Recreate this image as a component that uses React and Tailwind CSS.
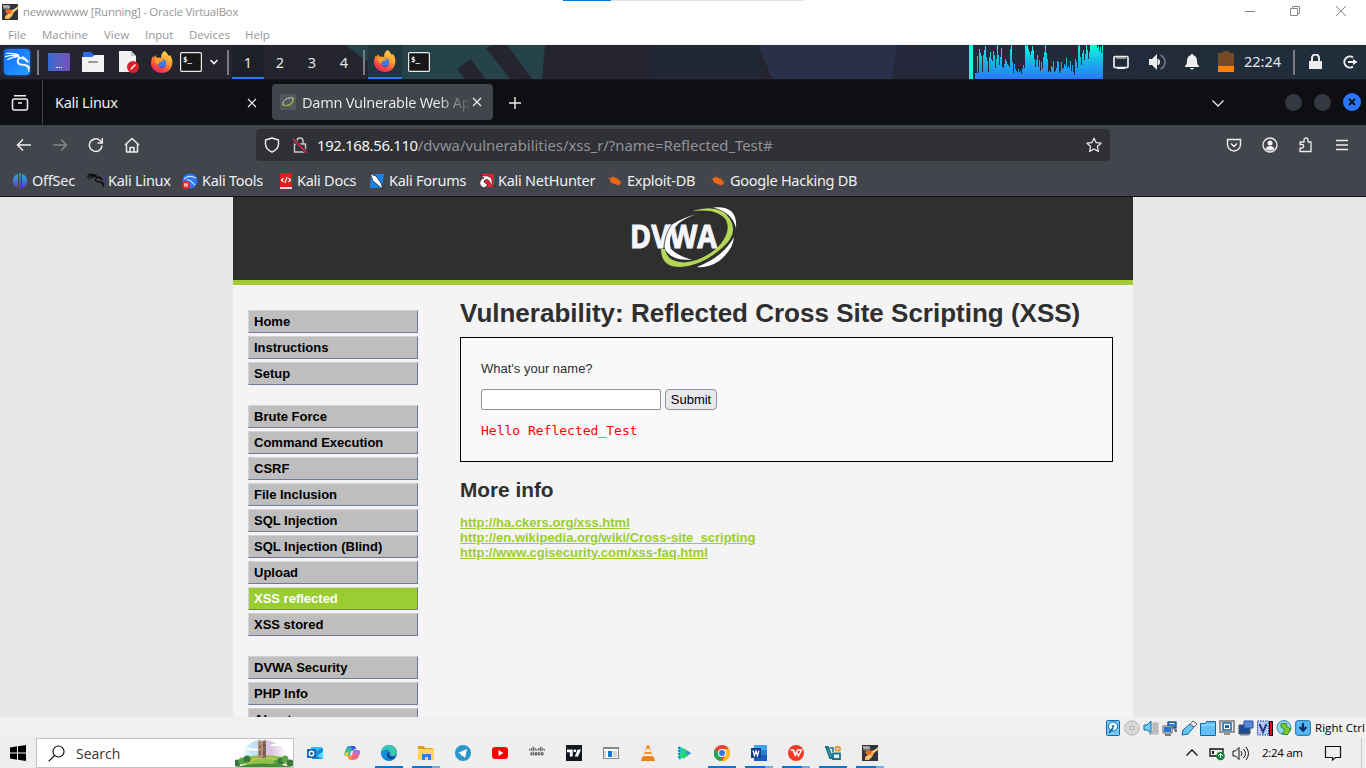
import React from "react";
import { SiKalilinux, SiCisco, SiTradingview } from "react-icons/si";

const WIN = "font-['Open_Sans','Noto_Sans',sans-serif]";

function Svg({ s = 16, vb = 16, className = "", children, ...rest }) {
  return (
    <svg width={s} height={s} viewBox={`0 0 ${vb} ${vb}`} className={`shrink-0 ${className}`} fill="none" {...rest}>
      {children}
    </svg>
  );
}

const VBoxIcon = () => (
  <Svg>
    <rect width="16" height="16" fill="#30343d" />
    <path d="M1 1h7v4l-3 1-4-1z" fill="#777" />
    <path d="M1 2h2v2M5 1v3M7 2v2" stroke="#ddd" />
    <path d="M9 6l4-1 3-3v3l-4 3-2 4-3 3H3v-3l3-2 2-3z" fill="#f9b352" />
    <path d="M3 7l3-2 4 1-1 3-4 1z" fill="#ee6820" />
    <path d="M11 7l4-3M5 13l3-2" stroke="#ffe1a0" strokeWidth="1.500" />
  </Svg>
);

const Firefox = () => (
  <Svg s={22} vb={22}>
    <defs>
      <linearGradient id="ff" x1="0.8" y1="0" x2="0.3" y2="1">
        <stop offset="0" stopColor="#ffde45" />
        <stop offset=".45" stopColor="#ff9a2b" />
        <stop offset=".75" stopColor="#ff4a42" />
        <stop offset="1" stopColor="#e4206c" />
      </linearGradient>
    </defs>
    <path d="M14 0c2 2 3 4 4 5l1-1c2 3 3 6 2 10-1 5-5 8-10 8C5 22 0 18 0 12c0-3 1-5 2-7l1 2 1-3 2 3c2-1 3 0 4 0 0-3 1-6 4-7z" fill="url(#ff)" />
    <circle cx="11" cy="12" r="4.2" fill="#3d7bea" />
    <path d="M4 8c2-1 4-1 6 0l3 1c-1 2-3 1-4 2-2 1-1 3-3 2-2 0-2-3-2-5z" fill="#ff9d28" />
    <path d="M7 14c3 3 7 2 8-1 0 4-5 7-8 1z" fill="#5946bd" />
  </Svg>
);

const TerminalIcon = () => (
  <svg width="22" height="20" viewBox="0 0 22 20" className="shrink-0">
    <rect x=".6" y=".6" width="20.8" height="18.8" rx="1" fill="#171717" stroke="#e8e8e8" strokeWidth="1.2" />
    <text x="3" y="9.5" fontSize="7.5" fontWeight="700" fill="#fff" fontFamily="DejaVu Sans Mono">$_</text>
  </svg>
);

const Dragon = ({ c = "#fff", s = 24 }) => <SiKalilinux size={s} color={c} stroke={c} strokeWidth="1" className="shrink-0" />;

/* ---------- VirtualBox window frame ---------- */

function VmTitle() {
  return (
    <header className={`h-[45px] bg-white ${WIN} text-[11.5px] text-[#979797] border-b border-[#f0f0f0] relative`}>
      <div className="absolute left-[563px] top-0 h-px w-[241px] bg-[#e3e3e3]">
        <div className="h-px w-12 bg-[#0078d7]" />
      </div>
      <div className="flex h-[23px] items-center pl-0.5">
        <VBoxIcon />
        <span className="ml-[5px] whitespace-nowrap tracking-[-0.25px]">newwwwww [Running] - Oracle VirtualBox</span>
        <div className="ml-auto flex items-center pr-[19px] -mt-0.5">
          <Svg s={12} vb={12} className="mr-[33px]"><path d="M1 6.500h10" stroke="#888" /></Svg>
          <Svg s={12} vb={12} className="mr-[34px]"><path d="M1.500 3.500h7v7h-7zM3.500 3V1.500h7v7H9" stroke="#888" /></Svg>
          <Svg s={12} vb={12}><path d="M1 1l10 10M11 1L1 11" stroke="#888" /></Svg>
        </div>
      </div>
      <nav className="flex h-[22px] items-center pt-px">
        <span className="w-[34px] ml-2">File</span>
        <span className="w-[62px]">Machine</span>
        <span className="w-[41px]">View</span>
        <span className="w-[44px]">Input</span>
        <span className="w-[56px]">Devices</span>
        <span>Help</span>
      </nav>
    </header>
  );
}

/* ---------- Kali panel ---------- */

const LOAD = [
  6, 6, 23, 6, 30, 26, 23, 7, 24, 29, 33, 22, 18, 7, 22, 27, 20, 18, 28, 24,
  11, 20, 34, 24, 14, 22, 31, 12, 11, 15, 20, 18, 15, 14, 12, 30, 34, 17, 6, 15,
  10, 8, 7, 10, 7, 8, 5, 10, 14, 11, 34, 33, 34, 30, 27, 24, 28, 33, 29, 20,
  12, 19, 24, 12, 19, 8, 17, 10, 22, 27, 34, 26, 20, 7, 8, 7, 13, 12, 18, 7,
  8, 11, 18, 17, 6, 8, 17, 10, 11, 15, 13, 21, 11, 13, 11, 18, 8, 14, 7, 4,
  20, 17, 11, 33, 34, 22, 14, 26, 29, 19, 25, 34, 29, 20, 27, 34, 34, 34, 34, 34,
  34, 34, 31, 33, 28, 32, 26, 34,
];

function Divider() {
  return <div className="h-[25px] w-0.5 bg-[#7b7d83] shrink-0" />;
}

function KaliPanel() {
  return (
    <div className="relative h-[35px] bg-[#24252e] font-['Noto_Sans',sans-serif] text-[14.500px] text-[#e6e6e6]">
      <svg className="absolute inset-0" width="1366" height="35" viewBox="0 45 1366 35">
        <defs>
          <linearGradient id="wall"><stop offset="0" stopColor="#24283a" /><stop offset="1" stopColor="#202e3b" /></linearGradient>
          <linearGradient id="load" x1="0" y1="45" x2="0" y2="79" gradientUnits="userSpaceOnUse"><stop offset="0" stopColor="#08ffe0" /><stop offset=".5" stopColor="#17b3e8" /><stop offset="1" stopColor="#2979ff" /></linearGradient>
        </defs>
        <path d="M345 45h200l-3 35H393z" fill="#26424b" />
        <path d="M457 69l14-10 15 21h-20zM486 48l7-3h14l26 35h-22z" fill="#25252f" />
        <rect x="650" y="45" width="110" height="35" fill="#222737" />
        <path d="M758 45h140l-7 35H773z" fill="#283149" />
        <path d="M898 45h468v35H891z" fill="url(#wall)" />
        <path d="M0 79.500h1366" stroke="#15171d" />
        <rect x="969" y="45" width="4" height="34" fill="#08ffe0" />
        {LOAD.map((h, i) => <rect key={i} x={975 + i} y={79 - h} width="1" height={h} fill="url(#load)" />)}
      </svg>
      <div className="relative flex h-[34px] items-center">
        <div className="ml-[4px] flex h-[26px] w-[26px] items-center justify-center rounded-sm bg-gradient-to-br from-[#176cff] to-[#279cff] shadow-[0_0_3px_#1767ff]"><Dragon s={25} /></div>
        <div className="ml-[7px]"><Divider /></div>
        <div className="ml-[9px] flex h-[18px] w-[22px] items-end justify-center rounded-[1px] bg-gradient-to-r from-[#346bd1] to-[#7252b8] pb-0.5"><Svg s={6} vb={6}><path d="M0 4.500h1.500M2.500 4.500H4M5 4.500h1" stroke="#fff" /></Svg></div>
        <svg className="ml-3" width="22" height="20" viewBox="0 0 22 20"><path d="M1 0h8l3 3h8v6H1z" fill="#2a6ce4" /><path d="M0 5h10l3-2h9v17H0z" fill="#f2f2f2" /><rect x="6" y="9" width="10" height="2" rx="1" fill="#999" /></svg>
        <svg className="ml-3.5" width="22" height="22" viewBox="0 0 22 22"><path d="M1 0h12l5 5v16H1z" fill="#f1f1f1" /><path d="M13 0v5h5z" fill="#c9c9c9" /><circle cx="15" cy="16" r="6" fill="#d8202a" /><path d="M12 19l1-2 4-4 1 1-4 4z" fill="#fff" /></svg>
        <div className="ml-[11px]"><Firefox /></div>
        <div className="ml-[7px]"><TerminalIcon /></div>
        <Svg s={12} vb={12} className="ml-1.5"><path d="M2.500 4l3.500 3.500L9.500 4" stroke="#eee" strokeWidth="1.700" /></Svg>
        <div className="ml-[7px]"><Divider /></div>
        <div className="ml-[3px] flex text-center leading-[34px]">
          <span className="h-[34px] w-8 border-b-2 border-[#2777ff] bg-[#1c2027]">1</span>
          <span className="w-8">2</span><span className="w-8">3</span><span className="w-8">4</span>
        </div>
        <div className="ml-[3px]"><Divider /></div>
        <div className="ml-[3px] flex h-[34px] w-[34px] items-center justify-center border-b-2 border-[#2777ff] bg-[#22363e]"><Firefox /></div>
        <div className="ml-1.5"><TerminalIcon /></div>
        <div className="ml-auto flex items-center">
          <Svg className="mr-[19px]"><rect x="1" y="2.500" width="14" height="11" rx="1" stroke="#eee" strokeWidth="1.700" /><path d="M4 2v3M6 2v3M8 2v3M10 2v3M12 2v3M4 13v1.500h8V13" stroke="#eee" /></Svg>
          <Svg s={18} vb={18} className="mr-[18px]"><path d="M1 6h3l5-5v16l-5-5H1z" fill="#eee" /><path d="M10 6c2 1 2 5 0 6z" stroke="#eee" fill="#eee" /><path d="M12.500 2c6 3 6 11 0 14" stroke="#798087" strokeWidth="1.500" /></Svg>
          <Svg className="mr-[18px]"><path d="M7 0h2v1c3 1 4 3 4 6 0 3 1 4 2 5v1H1v-1c1-1 2-2 2-5 0-3 1-5 4-6zM6 14h4c-1 2-3 2-4 0z" fill="#eee" /></Svg>
          <svg width="16" height="22" viewBox="0 0 16 22" className="mr-[10px]"><path d="M0 2h5V0h6v2h5v19H0z" fill="#754a25" /><path d="M0 15h16v6H0z" fill="#ff8109" /></svg>
          <span className="w-[49px]">22:24</span>
          <Divider />
          <Svg className="ml-[13px]"><path d="M1 7h13v8H1z" fill="#eee" /><path d="M4 8V4a3.500 3.500 0 017 0v4" stroke="#eee" strokeWidth="2" /></Svg>
          <Svg className="mr-[8px] ml-[18px]"><path d="M11 3.500A5.500 5.500 0 1011 12.500" stroke="#eee" strokeWidth="2" /><path d="M6 8h6" stroke="#eee" strokeWidth="2" /><path d="M11 5l4.500 3-4.500 3z" fill="#eee" /></Svg>
        </div>
      </div>
    </div>
  );
}

/* ---------- Browser chrome ---------- */

const Cross = () => <Svg s={10} vb={10}><path d="M1 1l8 8M9 1L1 9" stroke="#eee" strokeWidth="1.200" /></Svg>;

function TabBar() {
  return (
    <div className="flex h-[45px] items-center bg-[#0e0f13] text-[#f0f0f0]">
      <Svg s={18} vb={18} className="ml-[11px]"><rect x="1.500" y="5" width="15" height="11" rx="2" stroke="#eee" strokeWidth="1.500" /><path d="M3 1.800h12M7 9h4" stroke="#eee" strokeWidth="1.500" /></Svg>
      <div className="ml-[13px] h-11 w-px self-start bg-[#44454a]" />
      <span className="ml-3 w-[192px]">Kali Linux</span>
      <Cross />
      <div className="ml-[15px] mt-1 flex h-9 w-[221px] items-center self-start rounded bg-[#43454c] pl-2">
        <div className="flex h-4 w-4 items-center justify-center rounded-[1px] bg-[#54585b]"><Svg s={14} vb={14}><path d="M2 10C1 5 7 2 12 3c1 5-4 9-10 7z" stroke="#ccc" /><path d="M12 3c1 5-4 9-10 7" stroke="#8fae3b" strokeWidth="1.300" /></Svg></div>
        <span className="ml-1.5 mt-px w-[167px] overflow-hidden whitespace-nowrap bg-gradient-to-r from-[#f0f0f0] from-80% to-[#55575d] bg-clip-text text-transparent">Damn Vulnerable Web Ap</span>
        <span className="ml-[3px]"><Cross /></span>
      </div>
      <Svg s={12} vb={12} className="ml-4"><path d="M6 0v12M0 6h12" stroke="#eee" strokeWidth="1.400" /></Svg>
      <Svg s={14} vb={14} className="ml-auto"><path d="M1.500 4.500L7 10l5.500-5.500" stroke="#eee" strokeWidth="1.300" /></Svg>
      <div className="-mt-px ml-[60px] flex items-center gap-3 pr-[5px]">
        <i className="h-[17px] w-[17px] rounded-full bg-[#353842]" />
        <i className="h-[17px] w-[17px] rounded-full bg-[#353842]" />
        <Svg s={18} vb={18}><circle cx="9" cy="9" r="9" fill="#2777ff" /><path d="M6 6l6 6M12 6l-6 6" stroke="#111722" strokeWidth="2.200" /></Svg>
      </div>
    </div>
  );
}

function NavBar() {
  return (
    <div className="flex h-10 items-center text-[#eee]">
      <Svg className="ml-4" stroke="#eee" strokeWidth="1.500"><path d="M15 8H2M7 2.500L1.500 8 7 13.500" /></Svg>
      <Svg className="ml-5" stroke="#83858a" strokeWidth="1.500"><path d="M1 8h13M9 2.500L14.500 8 9 13.500" /></Svg>
      <Svg className="ml-5" stroke="#eee" strokeWidth="1.500"><path d="M14 8.500A6.300 6.300 0 1112 3.500l2 2M14.300 1v5H9.500" /></Svg>
      <Svg className="ml-5" stroke="#eee" strokeWidth="1.500"><path d="M1 8l7-6.500L15 8M2.500 7v8h11V7M6 15v-4.500h4V15" strokeLinejoin="round" /></Svg>
      <div className="ml-[116px] flex h-8 w-[854px] items-center rounded bg-[#303136]">
        <Svg className="ml-2"><path d="M8 1l6.500 2v4c0 4-3 6.500-6.500 8C4.500 13.500 1.500 11 1.500 7V3z" stroke="#eee" strokeWidth="1.400" strokeLinejoin="round" /></Svg>
        <Svg className="ml-3"><path d="M2.500 7h11v8h-11zM5 7V4a3 3 0 016 0v3" stroke="#ccc" strokeWidth="1.400" /><path d="M1 2l13.500 13.500" stroke="#303136" strokeWidth="3.500" /><path d="M1 2l13.500 13.500" stroke="#e22850" strokeWidth="1.600" /></Svg>
        <span className="ml-[9px] whitespace-nowrap text-[14.850px] tracking-[-0.33px] text-[#f4f4f4]">192.168.56.110<span className="tracking-normal text-[#919297]">/dvwa/vulnerabilities/xss_r/?name=Reflected_Test#</span></span>
        <Svg className="ml-auto mr-2"><path d="M8 1.200l2.100 4.400 4.900.6-3.600 3.300 1 4.900L8 12l-4.400 2.400 1-4.900L1 6.200l4.900-.6z" stroke="#eee" strokeWidth="1.200" strokeLinejoin="round" /></Svg>
      </div>
      <div className="ml-auto flex items-center gap-5 pr-4">
        <Svg><path d="M1.500 2.500h13v5a6.500 6.500 0 01-13 0zM5 6.500l3 3 3-3" stroke="#eee" strokeWidth="1.400" /></Svg>
        <Svg><circle cx="8" cy="8" r="7" stroke="#eee" strokeWidth="1.300" /><circle cx="8" cy="6" r="2.500" fill="#eee" /><path d="M3.500 12c1-4 8-4 9 0-2 2-7 2-9 0z" fill="#eee" /></Svg>
        <Svg><path d="M2 5h4V3a2 2 0 014 0v2h3v9.500H2V11h2a1.700 1.700 0 000-3.500H2z" stroke="#eee" strokeWidth="1.300" strokeLinejoin="round" /></Svg>
        <Svg><path d="M2 3.500h12M2 8h12M2 12.500h12" stroke="#eee" strokeWidth="1.300" /></Svg>
      </div>
    </div>
  );
}

const Spider = () => <Svg><path d="M1 5l3 1M6 2v3M11 4l-1 2M3 10l3-1M12 13l-2-2M15 9l-3-1" stroke="#a95a2e" /><path d="M3 5l4-1 5 3 2 4-3 1-4-1-4-3z" fill="#f06415" /></Svg>;

function Bookmarks() {
  return (
    <div className="flex h-[31px] items-center whitespace-nowrap text-[#f0f0f0]">
      <Svg className="ml-3"><defs><linearGradient id="off" x2="0" y2="1"><stop stopColor="#19bac2" /><stop offset="1" stopColor="#6830df" /></linearGradient></defs><path d="M6 1v14C-1 13-1 3 6 1zM7.300 0h1.400v16H7.300zM10 1v14c7-2 7-12 0-14z" fill="url(#off)" /></Svg>
      <span className="ml-1 w-[55px]">OffSec</span>
      <Dragon c="#08090b" s={17} /><span className="ml-[4px] w-[74px]">Kali Linux</span>
      <Svg><circle cx="8" cy="8" r="7.500" fill="#2777ff" /><path d="M2 6c4-4 8-3 12-1M5 7c4-1 5 3 8 5" stroke="#c8deff" strokeWidth="1.300" /><circle cx="4" cy="12" r="4" fill="#ed2424" /><path d="M2 11h4M3 11v3M5 11v3" stroke="#fff" /></Svg>
      <span className="ml-[4px] w-[76px]">Kali Tools</span>
      <Svg><path d="M2 0h12v15H2z" fill="#e21a1b" /><path d="M2 14h12v2H2z" fill="#ddd" /><path d="M5.500 5L3.500 7l2 2M10.500 5l2 2-2 2M9 4L7 10" stroke="#fff" strokeWidth="1.200" /></Svg>
      <span className="ml-[3px] w-[72px]">Kali Docs</span>
      <Svg><path d="M2 1h13l-2 14H1z" fill="#1883f0" /><path d="M1 0l3 2 3 1 5 7 2 6-4-3-6-5z" fill="#fff" stroke="#111" strokeWidth=".7" /></Svg>
      <span className="ml-[4px] w-[90px]">Kali Forums</span>
      <Svg><path d="M3 1h12v13H2z" fill="#e72531" /><path d="M1 2l4 1c5-1 9 2 8 7l3 4-5-4C10 5 5 6 5 9l4 3-4 3c-7-3-4-9 0-10z" fill="#fff" stroke="#111" strokeWidth=".7" /></Svg>
      <span className="ml-[3px] w-[109px]">Kali NetHunter</span>
      <Spider /><span className="ml-[4px] w-[83px]">Exploit-DB</span>
      <Spider /><span className="ml-[4px]">Google Hacking DB</span>
    </div>
  );
}

/* ---------- DVWA page ---------- */

const MENU = [
  ["Home", "Instructions", "Setup"],
  ["Brute Force", "Command Execution", "CSRF", "File Inclusion", "SQL Injection", "SQL Injection (Blind)", "Upload", "XSS reflected", "XSS stored"],
  ["DVWA Security", "PHP Info", "About"],
];

function DvwaLogo() {
  return (
    <svg width="110" height="64" viewBox="628 205 110 64">
      <path d="M700 213Q682 218 673 224Q663 231 663 241Q664 257 682 259.500L692 260Q678 256 671 249Q667 236 678 224Q686 217 700 213z" fill="#fff" />
      <path d="M713 207.500Q738 205 736 228Q732 212 713 207.500zM734 237Q733 250 719 261Q709 268 697 267Q712 261 721 253Q729 246 734 237z" fill="#fff" />
      <path d="M692 211Q720 203 730 219Q739 234 722 248Q702 266 680 267Q661 267 661 249L665 249Q667 262 684 262.500Q702 261 717 248Q732 233 726 220Q718 208 692 211z" fill="#b3d656" />
      <text x="630" y="248" fontFamily="Open Sans" fontWeight="700" fontSize="32.500" textLength="87" lengthAdjust="spacingAndGlyphs" fill="#f4f6fb" stroke="#f4f6fb" strokeWidth="1">DVWA</text>
      <path d="M672 224c-5 7-8 16-8 25" stroke="#2f2f2f" strokeWidth=".8" fill="none" />
    </svg>
  );
}

function DvwaPage() {
  return (
    <div className="h-[520px] overflow-hidden bg-[#e7e7e7] font-['Liberation_Sans',Arial,sans-serif] text-[13px] text-[#2f2f2f]">
      <div className="mx-auto h-full w-[900px] bg-[#f4f4f4]">
        <div className="flex h-[88px] justify-center border-b-[5px] border-[#a2cc34] bg-[#2f2f2f] pt-2"><DvwaLogo /></div>
        <div className="flex">
          <aside className="ml-[15px] flex w-[170px] shrink-0 flex-col gap-5 pt-[25px]">
            {MENU.map((g, i) => (
              <ul key={i} className="flex flex-col gap-[3px]">
                {g.map((m) => (
                  <li key={m} className={`h-[23px] border border-t-[#d2d2d2] border-l-[#d2d2d2] border-r-[#6c7b98] border-b-[#6c7b98] pl-[5px] font-bold leading-[22px] ${m === "XSS reflected" ? "bg-[#9acd32] text-white" : "bg-[#bebebe] text-black"}`}>{m}</li>
                ))}
              </ul>
            ))}
          </aside>
          <main className="ml-[42px] w-[653px]">
            <h1 className="mt-[13px] whitespace-nowrap text-[26px] font-bold leading-[30px]">Vulnerability: Reflected Cross Site Scripting (XSS)</h1>
            <section className="mt-[9px] h-[125px] border border-black bg-[#f8faf9] pt-[23px] pl-5">
              <p className="leading-[15px]">What's your name?</p>
              <div className="mt-[13px] flex gap-1">
                <input className="h-[21px] w-[180px] rounded-[2px] border border-[#8f8f9d] bg-white" />
                <button className="h-[21px] w-[52px] rounded border border-[#8f8f9d] bg-[#e9e9ed] leading-[19px] text-black">Submit</button>
              </div>
              <pre className="mt-[13px] font-['DejaVu_Sans_Mono',monospace] text-[13px] leading-[15px] text-[#ff0000]">Hello Reflected_Test</pre>
            </section>
            <h2 className="mt-4 text-[20.800px] font-bold leading-6">More info</h2>
            <div className="mt-[13px] flex flex-col items-start font-bold leading-[15px] text-[#9acd32] underline">
              <a>http://ha.ckers.org/xss.html</a>
              <a>http://en.wikipedia.org/wiki/Cross-site_scripting</a>
              <a>http://www.cgisecurity.com/xss-faq.html</a>
            </div>
          </main>
        </div>
      </div>
    </div>
  );
}

/* ---------- VM status bar ---------- */

const B = "#1565a8";
function StatusBar() {
  return (
    <div className={`flex h-[21px] items-center justify-end gap-[3px] bg-[#f0f0f0] ${WIN} text-[11.500px] text-black`}>
      <Svg><rect x="1.500" y=".5" width="13" height="15" rx="1" fill="#72c9f4" stroke={B} /><circle cx="8" cy="6.500" r="4.500" fill="#edfaff" stroke={B} /><circle cx="8" cy="6.500" r="1.200" fill={B} /><path d="M4 13l4-5" stroke={B} strokeWidth="2" /></Svg>
      <Svg><circle cx="8" cy="8" r="7.200" fill="#d8d8d8" stroke="#b5b5b5" /><circle cx="8" cy="8" r="2" fill="#eee" stroke="#aaa" /></Svg>
      <Svg><path d="M1 5h3l4-4v12l-4-3H1z" fill="#74cff8" stroke={B} /><path d="M10 3h5v11H6l4-2z" fill="#ccc" stroke="#aaa" /><path d="M11 5h3M11 8h3M11 11h3" stroke="#999" /></Svg>
      <Svg><path d="M5.500 1.500h9v7h-9z" fill="#2f83d8" stroke="#b1b4bb" /><path d="M6 2h8v6H6z" stroke="#194b84" /><path d="M7.500 3.500h5" stroke="#fff" /><path d="M1.500 6.500h8v6h-8z" fill="#2573d4" stroke="#fff" /><path d="M1 6h9v7H1z" stroke="#555" /><path d="M3 15h6M12 10h2v2" stroke="#555" strokeWidth="1.500" /></Svg>
      <Svg><path d="M1 15l1-5 7-6 4 3-6 7z" fill="#65c9f5" stroke={B} /><path d="M9 4l3-3 4 3-3 3z" fill="#eee" stroke="#666" /></Svg>
      <Svg><path d="M.5 3.500h5l1-2h9v14H.5z" fill="#61c1f4" stroke={B} /><path d="M1 5h14" stroke="#a8e5ff" /></Svg>
      <Svg><path d="M1 1h14v11H1zM5 14h6" fill="#eee" stroke="#777" strokeWidth="1.500" /><path d="M4 3h8v7H4z" fill="#fff" stroke={B} strokeWidth="1.500" /><path d="M6 5h4v3H6z" fill={B} /></Svg>
      <Svg><path d="M1 5h11v9H1z" fill="#1a4e94" stroke="#555" /><path d="M6 1h9v7H6z" fill="#5689e0" stroke="#2c51a1" /><path d="M2 15h9" stroke="#777" /></Svg>
      <div className="flex w-4 shrink-0"><svg width="16" height="16" viewBox="0 0 16 16"><rect x=".5" y="1" width="11" height="14" fill="#bac8fb" stroke="#253b99" strokeDasharray="1.500 1" /><path d="M2.500 4l3.500 8 3.500-8" stroke="#293986" strokeWidth="2" fill="none" /><path d="M12 1h4v15h-4z" fill="#111" /><path d="M13 2h2v13h-2z" fill="red" /></svg></div>
      <Svg><circle cx="8" cy="7.500" r="7" fill="#8fd5ef" stroke="#3189b3" /><path d="M5 4l5-1 1 4 4 2-4 6-5-2 3-3-4-3z" fill="#78cc31" stroke="#39872b" /></Svg>
      <Svg><rect x=".7" y=".7" width="14.600" height="14.600" rx="2" fill="#58b9f2" stroke={B} /><path d="M8 3v7M4.500 7L8 10.500 11.500 7" stroke="#092f65" strokeWidth="2.300" /></Svg>
      <span className="w-[52px] whitespace-nowrap pl-px tracking-[0.06px]">Right Ctrl</span>
    </div>
  );
}

/* ---------- Windows taskbar ---------- */

const APPS = [
  { k: "outlook", g: <><path d="M4 2h11v11H4z" fill="#35b8f1" /><path d="M5 9l11-6v11H5z" fill="#128ad6" /><path d="M10 11l6-5v8z" fill="#50d9ff" /><rect y="4" width="9" height="9" rx="1" fill="#0869bc" /><circle cx="4.500" cy="8.500" r="2.200" stroke="#fff" strokeWidth="1.400" /></> },
  { k: "copilot", g: <><path d="M4 1h6l2 3-3 1-3 6H2C-1 11 1 7 2 4z" fill="#179fde" /><path d="M2 5l5-3-2 9H3C-1 11 1 8 2 5z" fill="#4ac47a" /><path d="M1 8l4-1-1 4H3C0 11 0 10 1 8z" fill="#e9c83a" /><path d="M6 1h4c2 0 1 3 3 3H9z" fill="#3855d5" /><path d="M9 5h4c4 0 3 3 2 6-1 3-3 4-8 4-2 0-2-4-4-4h4z" fill="#ef6a78" /><path d="M3 11h5l-1 4C4 15 4 12 3 11z" fill="#ff9a38" /><path d="M10 5h3c4 0 3 2 2 5L9 8z" fill="#b26bea" /><path d="M7 6h2L8 10H6z" fill="#eee" /></> },
  { k: "edge", run: 28, g: <><circle cx="8" cy="8" r="8" fill="#1477ca" /><path d="M0 7C1-1 13-3 16 7c0 4-5 5-7 3 2-3-2-6-9-3z" fill="#38c9ae" /><path d="M0 8c1-4 8-5 9-1-3 0-4 4 0 7-5 1-9-2-9-6z" fill="#168ee0" /><path d="M9 7c-3 2-1 6 6 5-4 4-10 1-9-3 0-1 1-2 3-2z" fill="#143f82" /></> },
  { k: "files", run: 20, g: <><path d="M0 1h6l1 2h8v5H0z" fill="#dba01b" /><path d="M0 4h16v11H0z" fill="#ffd75e" /><path d="M4 9h9v6h-3v-3H7v3H4z" fill="#2387ce" /></> },
  { k: "telegram", g: <><circle cx="8" cy="8" r="8" fill="#2a97cb" /><path d="M3 8l9-4-2 9-3-3-1 2v-3z" fill="#fff" /></> },
  { k: "youtube", g: <><rect y="2" width="16" height="12" rx="3" fill="#f00" /><path d="M6.500 5l5 3-5 3z" fill="#fff" /></> },
  { k: "cisco", el: <SiCisco size={16} color="#444" stroke="#444" strokeWidth=".5" className="-mt-1" /> },
  { k: "tv", el: <div className="flex h-4 w-4 items-center justify-center bg-[#131722]"><SiTradingview size={14} color="#fff" /></div> },
  { k: "window", g: <><rect x=".5" y="2.500" width="15" height="11" fill="#fff" stroke="#888" /><path d="M0 3h16" stroke="#888" strokeWidth="2" /><path d="M5 6h4v6H5z" fill="#087bd3" /><path d="M10 7h4M10 9h4M10 11h4M2 6v6" stroke="#aaa" /></> },
  { k: "vlc", g: <><path d="M7 0h2l4 12H3z" fill="#f49427" /><path d="M6 4h4l1 3H5zM4 9h8l1 2H3z" fill="#eee" /><path d="M2 12h12l1 4H1z" fill="#ed8119" /></> },
  { k: "play", g: <><path d="M2 1l12 7-12 7z" fill="#24c6c1" /><path d="M9 5l5 3-5 4z" fill="#4286e8" /><path d="M4 8l2 0V4h3v5h2l-4 5-4-4z" fill="#27db60" /><path d="M2 2v12" stroke="#1691ad" strokeWidth="2" strokeDasharray="2 1" /></> },
  { k: "chrome", run: 28, g: <><circle cx="8" cy="8" r="8" fill="#ea4335" /><path d="M1 4l5 6 2 6C0 16-2 8 1 4z" fill="#25a452" /><path d="M8 4h7c3 6-1 12-7 12l4-7z" fill="#fbc116" /><circle cx="8" cy="8" r="4" fill="#fff" /><circle cx="8" cy="8" r="3" fill="#3977e8" /></> },
  { k: "word", run: 20, g: <><path d="M3 0h13v5H3z" fill="#41a5ee" /><path d="M3 5h13v5H3z" fill="#2b7cd3" /><path d="M3 10h13v6H3z" fill="#185abd" /><rect y="3" width="10" height="10" fill="#103f91" /><path d="M2 5.500l1.500 5L5 6l1.500 4.500 1.500-5" stroke="#fff" strokeWidth="1.300" /></> },
  { k: "wps", run: 20, g: <><circle cx="8" cy="8" r="8" fill="#f33b24" /><path d="M2.500 5h3l2 5 2-5h4l-3 6-2-4M5 5l2.500 6" stroke="#fff" strokeWidth="1.400" /></> },
  { k: "vs", run: 28, g: <><path d="M0 2h3l4 10h2M1 2l4 11h3V8.500h7V14H7" stroke="#18758c" strokeWidth="1.800" /><path d="M5 3h3v4" stroke="#18758c" strokeWidth="1.500" /><rect x="10.500" y="2" width="4.500" height="3.500" rx="1" stroke="#e79735" strokeWidth="1.800" /></> },
  { k: "vbox", run: 20, el: <VBoxIcon /> },
];

function SearchArt() {
  return (
    <svg width="58" height="29" viewBox="0 0 58 29" className="ml-auto self-end">
      <defs><linearGradient id="sky" x2="1"><stop stopColor="#fff" /><stop offset=".25" stopColor="#bfe4fa" /><stop offset=".65" stopColor="#ddc2df" /><stop offset="1" stopColor="#fff" /></linearGradient></defs>
      <path d="M6 20C8 8 16 2 28 2s23 7 24 18z" fill="url(#sky)" />
      <path d="M11 12q3-4 7-1 5-2 7 2zM34 8q6-5 12 0z" fill="#fff" />
      <ellipse cx="29" cy="23" rx="23" ry="6" fill="#8bc34b" />
      <path d="M12 25q16-11 39 1" stroke="#d7b864" strokeWidth="1.500" fill="none" />
      <path d="M23 20V4l1-3 1 2h4l1-2 1 3v16z" fill="#b18d7b" />
      <path d="M28 3h3v17h-3z" fill="#856a5c" />
      <path d="M25 7v3M25 13v4M29 6v3M29 13v4" stroke="#553e38" />
      {[2, 7, 12, 42, 46, 50, 55].map((x, i) => <circle key={x} cx={x} cy={25 - (i % 3) * 2} r="3.500" fill={i % 2 ? "#5ba34a" : "#37793d"} />)}
      <path d="M0 29q29-7 58 0z" fill="#488c34" />
    </svg>
  );
}

function Taskbar() {
  return (
    <div className={`flex h-[30px] items-stretch bg-[#eeeeee] ${WIN} text-black`}>
      <Svg className="ml-[10px] mt-[7px]"><path d="M0 2.500L7 1.300v6.200H0zM8 1.200L16 0v7.500H8zM0 8.500h7v6.200L0 13.600zM8 8.500h8V16l-8-1.200z" fill="#000" /></Svg>
      <div className="ml-[10px] flex w-[258px] items-center border border-[#c4c4c4] bg-white">
        <Svg s={17} vb={17} className="ml-[11px]"><circle cx="10.500" cy="6.500" r="5.500" stroke="#111" strokeWidth="1.200" /><path d="M6.500 10.500L.7 16.300" stroke="#111" strokeWidth="1.200" /></Svg>
        <span className="ml-[11px] text-[14px] text-[#333]">Search</span>
        <SearchArt />
      </div>
      <div className="ml-[2px] flex">
        {APPS.map((a) => (
          <div key={a.k} className="flex w-[37px] flex-col items-center">
            <div className="flex h-[28px] items-center pt-0.5">{a.el || <Svg>{a.g}</Svg>}</div>
            {a.run && <div className="flex h-0.5 w-7 bg-[#75ade0]"><div className={`h-0.5 bg-[#0875cf] ${a.run === 28 ? "w-7" : "w-5"}`} /></div>}
          </div>
        ))}
      </div>
      <div className="ml-auto flex items-center">
        <Svg s={14} vb={14} className="mr-[10px]"><path d="M1.500 9.500L7 4l5.500 5.500" stroke="#111" strokeWidth="1.300" /></Svg>
        <Svg><path d="M1 4h13v7H1z" stroke="#111" strokeWidth="1.300" /><path d="M3 6h2v3H3z" fill="#111" /><circle cx="11.500" cy="11" r="4.300" fill="#16863c" /><path d="M9 11l2.500-2.500L14 11M11.500 9v4" stroke="#fff" /></Svg>
        <Svg s={17} vb={17} className="ml-[7px]"><path d="M1 6h2.500L7 2.500v12L3.500 11H1z" stroke="#111" /><path d="M9 6q2 2.500 0 5M11.500 4q4 4.500 0 9M14 2q5 6.500 0 13" stroke="#111" /></Svg>
        <span className="ml-[13px] w-[62px] whitespace-nowrap text-[11.500px] tracking-[-0.3px]">2:24 am</span>
        <Svg s={18} vb={18}><path d="M1.500 2.500h15v11h-5L8.500 16v-2.500h-7z" stroke="#111" strokeWidth="1.200" /></Svg>
        <div className="ml-[19px] h-full w-px bg-[#c5c5c5]" />
        <div className="w-1" />
      </div>
    </div>
  );
}

export default function App() {
  return (
    <div className="h-[768px] w-[1366px] overflow-hidden">
      <VmTitle />
      <KaliPanel />
      <div className="bg-[#43454c] font-['Noto_Sans',sans-serif] text-[14.500px] tracking-[-0.26px]">
        <TabBar />
        <NavBar />
        <Bookmarks />
        <div className="h-px bg-[#111216]" />
      </div>
      <DvwaPage />
      <StatusBar />
      <Taskbar />
    </div>
  );
}
